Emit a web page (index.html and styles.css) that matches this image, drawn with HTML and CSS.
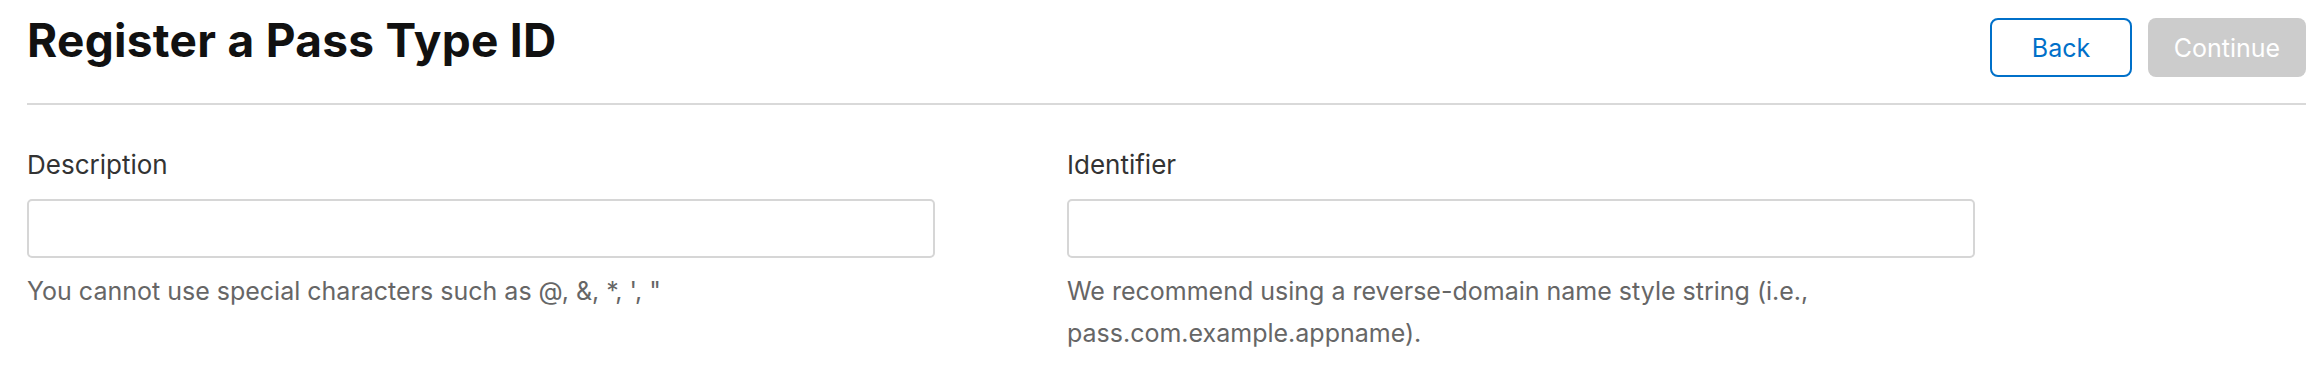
FILE: index.html
```html
<!DOCTYPE html>
<html lang="en">
  <head>
    <meta charset="UTF-8" />
    <meta name="viewport" content="width=device-width, initial-scale=1.0" />
    <title>Register a Pass Type ID</title>

    <link rel="stylesheet" href="styles.css">
  </head>

  <body>
    <div class="page">
      <div class="header">
        <h1>Register a Pass Type ID</h1>
        <div class="actions">
          <button class="btn btn-back" type="button">Back</button>
          <button class="btn btn-continue" type="button" disabled>Continue</button>
        </div>
      </div>

      <form class="fields">
        <div class="field">
          <label for="description">Description</label>
          <input id="description" type="text" />
          <p class="hint">You cannot use special characters such as @, &amp;, *, ', "</p>
        </div>
        <div class="field">
          <label for="identifier">Identifier</label>
          <input id="identifier" type="text" />
          <p class="hint">We recommend using a reverse-domain name style string (i.e., pass.com.example.appname).</p>
        </div>
      </form>
    </div>
  </body>
</html>
```

FILE: styles.css
```css
body {
  margin: 0;
  background: #fff;
  font-family: Inter, "Liberation Sans", sans-serif;
  color: #333;
}

.page {
  padding: 0 16px 0 27px;
}

.header {
  display: flex;
  justify-content: space-between;
  align-items: flex-start;
  padding: 17px 0 26px;
  border-bottom: 2px solid #d9d9d9;
}

h1 {
  margin: 0;
  font-size: 46px;
  line-height: 47px;
  font-weight: 700;
  letter-spacing: 0.3px;
  color: #111;
}

.actions {
  display: flex;
  gap: 16px;
  margin-top: 1px;
}

.btn {
  height: 59px;
  border-radius: 8px;
  font-family: Inter, "Liberation Sans", sans-serif;
  font-size: 25px;
  padding: 0;
  cursor: pointer;
}

.btn-back {
  width: 142px;
  background: #fff;
  color: #0070c9;
  border: 2px solid #0070c9;
}

.btn-continue {
  width: 158px;
  background: #ccc;
  color: #fff;
  border: none;
}

.fields {
  display: grid;
  grid-template-columns: 908px 908px;
  column-gap: 132px;
  margin-top: 41px;
}

.field label {
  display: block;
  font-size: 26px;
  line-height: 37px;
  color: #333;
}

.field input {
  display: block;
  box-sizing: border-box;
  width: 100%;
  height: 59px;
  margin-top: 16px;
  border: 2px solid #d6d6d6;
  border-radius: 5px;
  background: #fff;
}

.hint {
  margin: 12px 0 0;
  font-size: 25px;
  line-height: 42px;
  color: #666;
}
```
